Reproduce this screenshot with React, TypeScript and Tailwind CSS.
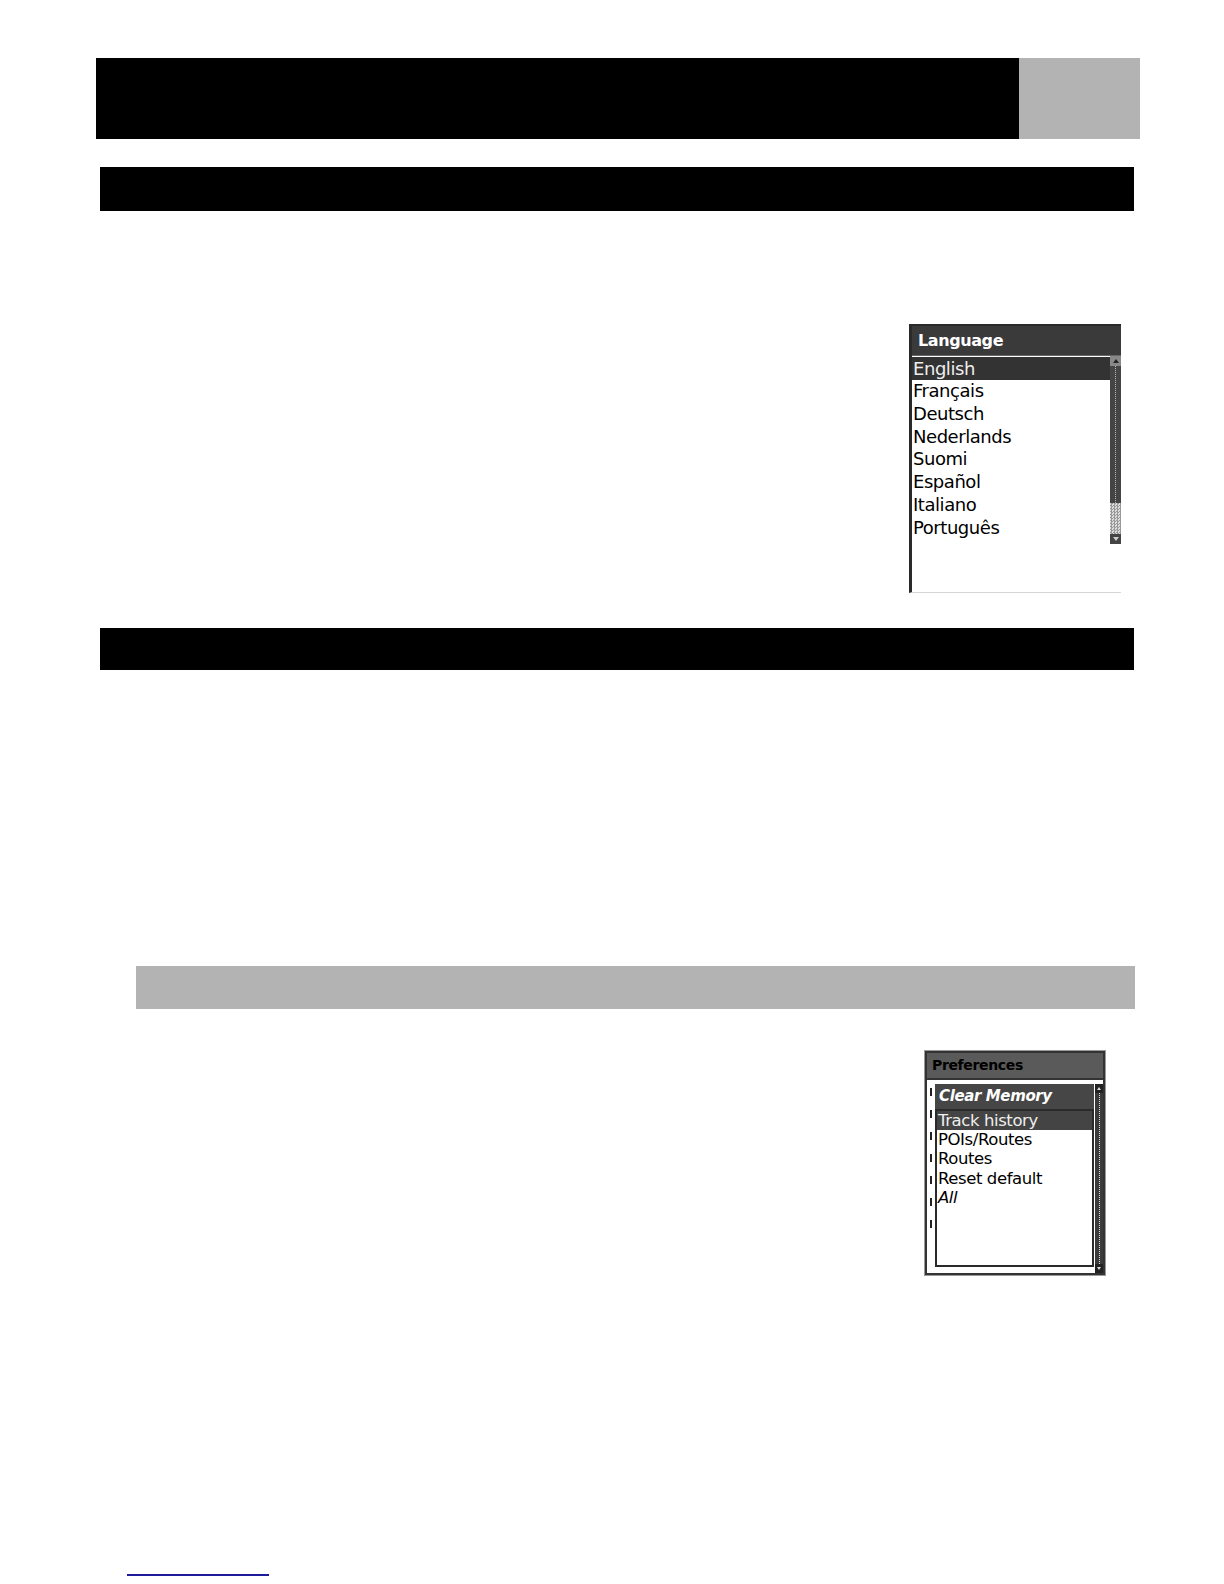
const font = { fontFamily: '"DejaVu Sans", "Noto Sans", sans-serif' };

const languages = ["English", "Français", "Deutsch", "Nederlands", "Suomi", "Español", "Italiano", "Português"];
const memoryItems = ["Track history", "POIs/Routes", "Routes", "Reset default", "All"];

function LanguagePanel() {
  return (
    <div className="w-[212px] h-[269px] flex flex-col bg-white border-l-[3px] border-t-[2px] border-[#2a2a2a] border-b border-b-[#d6d6d6]" style={font}>
      <div className="h-[30px] bg-[#3a3a3a] border-b border-[#666] flex items-center pl-[6px] text-white font-bold text-[16px] tracking-tight">
        Language
      </div>
      <div className="flex flex-1">
        <div className="flex-1 flex flex-col pt-[1px]">
          {languages.map((l, i) => (
            <div
              key={l}
              className={
                i === 0
                  ? "h-[23px] leading-[23px] pl-[1px] text-[18px] bg-[#333] text-[#eee] tracking-tight"
                  : "h-[22.8px] leading-[22.8px] pl-[1px] text-[18px] text-black tracking-tight"
              }
            >
              {l}
            </div>
          ))}
        </div>
        <div className="w-[11px] h-[188px] flex flex-col bg-[#333]">
          <div className="h-[10px] bg-[#888] flex items-center justify-center">
            <div className="w-0 h-0 border-l-[3px] border-r-[3px] border-b-[4px] border-transparent border-b-[#222]" />
          </div>
          <div className="flex-1 flex justify-center bg-[#444]">
            <div className="w-0 h-full border-l border-dotted border-[#bbb]" />
          </div>
          <div className="h-[31px] bg-[repeating-conic-gradient(#999_0%_25%,#ddd_0%_50%)] bg-[length:3px_3px]" />
          <div className="h-[10px] bg-[#444] flex items-center justify-center">
            <div className="w-0 h-0 border-l-[3px] border-r-[3px] border-t-[4px] border-transparent border-t-[#ccc]" />
          </div>
        </div>
      </div>
    </div>
  );
}

function PreferencesPanel() {
  return (
    <div className="w-[182px] h-[226px] border border-[#9a9a9a] bg-white" style={font}>
      <div className="h-full flex flex-col border-2 border-[#333]">
        <div className="h-[27px] bg-[#5a5a5a] border-b-2 border-[#333] flex items-center pl-[5px] text-black font-bold text-[14px] tracking-tight">
          Preferences
        </div>
        <div className="flex flex-1 pt-[4px]">
          <div className="w-[8px] flex flex-col items-center gap-[14px] pt-[4px]">
            {[0, 1, 2, 3, 4, 5, 6].map((k) => (
              <div key={k} className="w-[2px] h-[8px] bg-[#222]" />
            ))}
          </div>
          <div className="flex-1 flex flex-col pb-[6px]">
            <div className="h-[25px] bg-[#464646] flex items-center pl-[4px] text-white font-bold italic text-[15px] tracking-tight">
              Clear Memory
            </div>
            <div className="flex-1 border-2 border-[#2a2a2a] bg-white flex flex-col">
              {memoryItems.map((m, i) => (
                <div
                  key={m}
                  className={
                    i === 0
                      ? "h-[19.2px] leading-[19.2px] pl-[1px] text-[16.5px] bg-[#444] text-[#eee] tracking-tight"
                      : m === "All"
                      ? "h-[19.2px] leading-[19.2px] pl-[1px] text-[16.5px] text-black italic tracking-tight"
                      : "h-[19.2px] leading-[19.2px] pl-[1px] text-[16.5px] text-black tracking-tight"
                  }
                >
                  {m}
                </div>
              ))}
            </div>
          </div>
          <div className="w-[8px] flex flex-col bg-[#3a3a3a] ml-[1px]">
            <div className="h-[9px] bg-[#222] flex items-center justify-center">
              <div className="w-0 h-0 border-l-[2px] border-r-[2px] border-b-[3px] border-transparent border-b-[#ddd]" />
            </div>
            <div className="flex-1 flex justify-center">
              <div className="w-0 h-full border-l border-dotted border-[#ddd]" />
            </div>
            <div className="h-[9px] bg-[#222] flex items-center justify-center">
              <div className="w-0 h-0 border-l-[2px] border-r-[2px] border-t-[3px] border-transparent border-t-[#ddd]" />
            </div>
          </div>
        </div>
      </div>
    </div>
  );
}

export default function App() {
  return (
    <div className="w-[1224px] h-[1584px] bg-white pt-[58px] overflow-hidden">
      {/* page header */}
      <div className="ml-[96px] w-[1044px] h-[81px] flex">
        <div className="flex-1 bg-black" />
        <div className="w-[121px] bg-[#b3b3b3]" />
      </div>

      <div className="mt-[28px] ml-[100px] w-[1034px] h-[44px] bg-black" />

      <div className="mt-[113px] ml-[909px]">
        <LanguagePanel />
      </div>

      <div className="mt-[35px] ml-[100px] w-[1034px] h-[42px] bg-black" />

      <div className="mt-[296px] ml-[136px] w-[999px] h-[43px] bg-[#b3b3b3]" />

      <div className="mt-[41px] ml-[924px]">
        <PreferencesPanel />
      </div>

      <div className="mt-[298px] ml-[127px] w-[142px] h-[2px] bg-[#1c1c9a]" />
    </div>
  );
}
